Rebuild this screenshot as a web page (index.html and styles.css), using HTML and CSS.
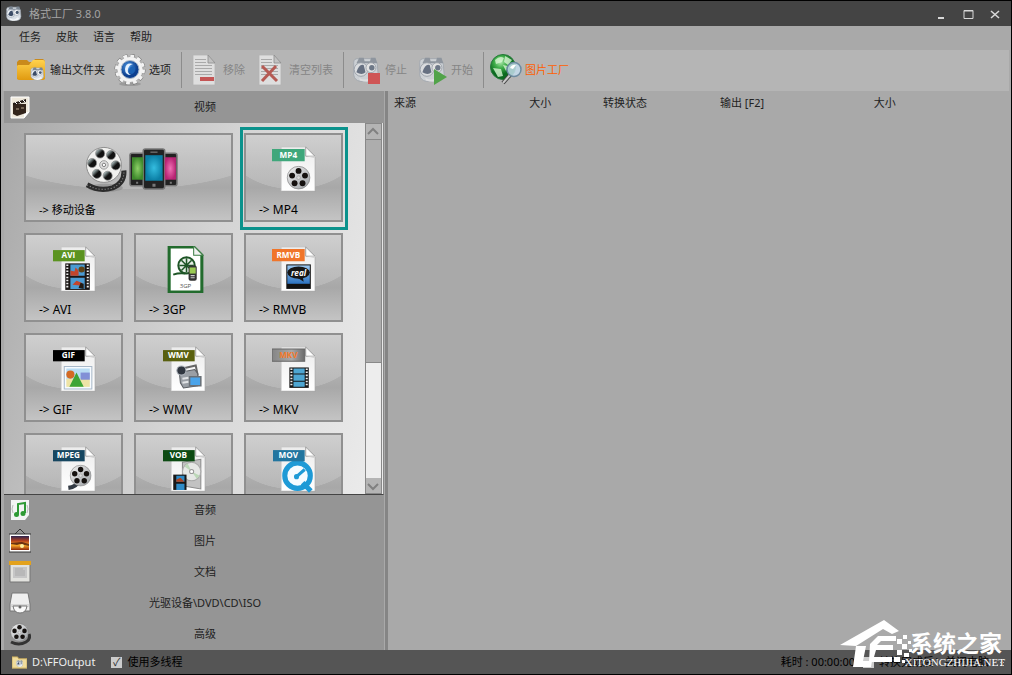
FILE: index.html
```
<!DOCTYPE html>
<html lang="zh-CN">
<head>
    <meta charset="UTF-8">
    <meta name="viewport" content="width=device-width, initial-scale=1.0">
    <title>格式工厂 3.8.0</title>
    <link rel="stylesheet" href="styles.css">
</head>
<body>
    <!-- Shared icon parts -->
    <svg class="defs" aria-hidden="true">
        <defs>
            <linearGradient id="gFolder" x1="0" y1="0" x2="0" y2="1"><stop offset="0" stop-color="#ffd24d"/><stop offset="1" stop-color="#e09a10"/></linearGradient>
            <linearGradient id="gPaper" x1="0" y1="0" x2="0" y2="1"><stop offset="0" stop-color="#ececec"/><stop offset="1" stop-color="#ffffff"/></linearGradient>
            <linearGradient id="gSky" x1="0" y1="0" x2="0" y2="1"><stop offset="0" stop-color="#9cc8f0"/><stop offset="1" stop-color="#2c72c0"/></linearGradient>
            <linearGradient id="gSunset" x1="0" y1="0" x2="0" y2="1"><stop offset="0" stop-color="#2a2350"/><stop offset=".35" stop-color="#b5401c"/><stop offset=".65" stop-color="#ffae2b"/><stop offset="1" stop-color="#8c2408"/></linearGradient>
            <linearGradient id="gMetal" x1="0" y1="0" x2="1" y2="1"><stop offset="0" stop-color="#f4f4f4"/><stop offset="1" stop-color="#9a9ea2"/></linearGradient>
            <linearGradient id="gHole" x1="0" y1="0" x2="1" y2="1"><stop offset=".2" stop-color="#9aa"/><stop offset=".5" stop-color="#111"/></linearGradient>
            <linearGradient id="gTagGrey" x1="0" y1="0" x2="1" y2="0"><stop offset="0" stop-color="#858585"/><stop offset=".6" stop-color="#a8a8a8"/><stop offset="1" stop-color="#6c6c6c"/></linearGradient>
            <radialGradient id="gBlue" cx=".4" cy=".35"><stop offset="0" stop-color="#4f9be6"/><stop offset="1" stop-color="#0c3f8f"/></radialGradient>
            <radialGradient id="gGreen" cx=".4" cy=".3"><stop offset="0" stop-color="#b2eab0"/><stop offset=".5" stop-color="#3dac48"/><stop offset="1" stop-color="#0c6a20"/></radialGradient>
            <radialGradient id="gPhoneG"><stop offset="0" stop-color="#8ed068"/><stop offset="1" stop-color="#3f8a2c"/></radialGradient>
            <radialGradient id="gPhoneB"><stop offset="0" stop-color="#35bde0"/><stop offset="1" stop-color="#0b7fa5"/></radialGradient>
            <radialGradient id="gPhoneP"><stop offset="0" stop-color="#f070b4"/><stop offset="1" stop-color="#b82474"/></radialGradient>

            <symbol id="paper" viewBox="0 0 44 46">
                <path d="M9.500 1.500h25l8 9v34h-33z" fill="#777" opacity=".4"/>
                <path d="M9 1h25l8 9v34H9z" fill="url(#gPaper)" stroke="#c4c4c4" stroke-width=".6"/>
                <path d="M33 1v9h9z" fill="#fff" stroke="#8d8d8d" stroke-width=".8"/>
                <path d="M34 10h8v2z" fill="#d4d4d4"/>
            </symbol>

            <symbol id="reel" viewBox="0 0 40 40">
                <circle cx="20" cy="20" r="18.500" fill="url(#gMetal)" stroke="#777" stroke-width="1"/>
                <g fill="#15110f">
                    <circle cx="20" cy="9" r="4.800"/><circle cx="30.500" cy="16.600" r="4.800"/><circle cx="26.500" cy="29" r="4.800"/>
                    <circle cx="13.500" cy="29" r="4.800"/><circle cx="9.500" cy="16.600" r="4.800"/>
                </g>
                <circle cx="20" cy="20" r="3" fill="#ddd" stroke="#999"/>
            </symbol>

            <symbol id="reel-large" viewBox="0 0 40 40">
                <circle cx="20" cy="20" r="18.500" fill="#f1f1ef" stroke="#8a8a8a" stroke-width="1"/>
                <g fill="url(#gHole)" stroke="#8c8c8c" stroke-width=".8">
                    <circle cx="16" cy="8" r="4.800"/><circle cx="27.500" cy="9.500" r="4.800"/><circle cx="32.500" cy="20.500" r="4.800"/>
                    <circle cx="24" cy="31.500" r="4.800"/><circle cx="12.500" cy="29.500" r="4.800"/><circle cx="7.500" cy="18" r="4.800"/>
                </g>
                <circle cx="20" cy="20" r="4.500" fill="#ddd" stroke="#999"/>
                <circle cx="20" cy="20" r="1.800" fill="#fff" stroke="#777"/>
            </symbol>

            <symbol id="cam" viewBox="0 0 32 32">
                <path d="M3 8q0-4 5-4h13q7 0 8 6l1 12q-1 7-8 7H10Q4 28 3 22z" fill="#d9dfe6" stroke="#98a1ab"/>
                <path d="M9 3h5l1 4h6l1-4h5l2 6H6z" fill="#7a8592"/>
                <circle cx="11" cy="16" r="7.500" fill="#eef2f6" stroke="#8a94a0"/>
                <path d="M6 19q3-10 8-8l2 8q-4 4-10 0z" fill="#3c4c66"/>
                <circle cx="22" cy="14" r="5.500" fill="#fafafa" stroke="#8a94a0"/>
                <circle cx="23" cy="14" r="3" fill="#47586f"/>
                <path d="M9 25q8 5 15-2l3 3q-7 6-17 2z" fill="#f4f6f8"/>
            </symbol>

            <symbol id="sheet" viewBox="0 0 32 32">
                <path d="M5 1h15l7 8v22H5z" fill="#f4f4f4" stroke="#b4b4b4" stroke-width=".8"/>
                <path d="M20 1v8h7z" fill="#c8c8c8" stroke="#777" stroke-width=".8"/>
                <path d="M7 5.500h11M7 8.500h11M7 11.500h17M7 14.500h17M7 17.500h17M7 20.500h17" stroke="#a3a3a3"/>
            </symbol>

            <symbol id="folder" viewBox="0 0 32 32">
                <path d="M2 8l2-2h8l2 2h4l2-3h8l2 2v18H2z" fill="#c98a1c"/>
                <path d="M3 11h11l4-5h10q2 0 2 2v16q0 2-2 2H4q-2 0-2-2V12z" fill="url(#gFolder)"/>
            </symbol>
        </defs>
    </svg>

    <div class="window">
        <header class="titlebar">
            <svg class="app-icon" viewBox="0 0 32 32"><use href="#cam"/></svg>
            <h1>格式工厂 3.8.0</h1>
            <div class="window-controls">
                <button type="button" aria-label="最小化"><svg viewBox="0 0 12 12"><path d="M3 10h6" stroke-width="2"/></svg></button>
                <button type="button" aria-label="最大化"><svg viewBox="0 0 12 12"><path d="M2 2.500h9v8H2zM2 3h9"/></svg></button>
                <button type="button" aria-label="关闭"><svg viewBox="0 0 12 12"><path d="M2 3l8 7M10 3l-8 7" stroke-width="1.600"/></svg></button>
            </div>
        </header>

        <nav class="menubar">
            <button type="button">任务</button>
            <button type="button">皮肤</button>
            <button type="button">语言</button>
            <button type="button">帮助</button>
        </nav>

        <div class="toolbar">
            <button type="button">
                <svg viewBox="0 0 32 32"><use href="#folder"/><use href="#cam" x="14" y="12" width="16" height="15"/></svg>
                输出文件夹
            </button>
            <button type="button">
                <svg viewBox="0 0 32 32">
                    <ellipse cx="16" cy="30" rx="11" ry="2" fill="#888" opacity=".6"/>
                    <circle cx="16" cy="15.500" r="13.500" fill="none" stroke="#707070" stroke-width="4" stroke-dasharray="4.200 2.860"/>
                    <circle cx="16" cy="15.500" r="13" fill="#f3f3f3" stroke="#8a8a8a" stroke-width=".6"/>
                    <circle cx="16" cy="15.500" r="13.500" fill="none" stroke="#f3f3f3" stroke-width="3" stroke-dasharray="3.800 3.260"/>
                    <circle cx="16" cy="15.500" r="9" fill="url(#gBlue)" stroke="#a9b8c8"/>
                    <path d="M19 10q-7-2-8 5 0 6 6 6-4-2-3-6 1-4 5-5z" fill="#e4f1ff"/>
                    <path d="M15 16q1-5 6-3 1 5-3 7-3-1-3-4z" fill="#1c62b4"/>
                </svg>
                选项
            </button>
            <span class="separator"></span>
            <button type="button" disabled>
                <svg viewBox="0 0 32 32"><use href="#sheet"/><path d="M12 23h14v4H12z" fill="#c22"/></svg>
                移除
            </button>
            <button type="button" disabled>
                <svg viewBox="0 0 32 32"><use href="#sheet"/><path d="M8 12l15 15M22 12L8 27" stroke="#b52a20" stroke-width="3"/></svg>
                清空列表
            </button>
            <span class="separator"></span>
            <button type="button" disabled>
                <svg viewBox="0 0 32 32"><use href="#cam" x="1" y="1" width="29" height="29"/><path d="M18 19h12v11H18z" fill="#d22"/></svg>
                停止
            </button>
            <button type="button" disabled>
                <svg viewBox="0 0 32 32"><use href="#cam" x="1" y="1" width="29" height="29"/><path d="M18 15l13 8-13 8z" fill="#1c9a10"/></svg>
                开始
            </button>
            <span class="separator"></span>
            <button type="button" class="highlight">
                <svg viewBox="0 0 32 32">
                    <circle cx="13" cy="13" r="12.500" fill="url(#gGreen)" stroke="#26793a"/>
                    <path d="M5 6q5-5 9-2l-2 4-6 2zM15 2l7 4-4 5-4-3zM3 14l8 1 2 7-5 1zM13 11l5 1-2 5z" fill="#d9f5d4" opacity=".8"/>
                    <path d="M20 21l-7 8" stroke="#444" stroke-width="4"/>
                    <path d="M20 21l-7 8" stroke="#c9c9c9" stroke-width="2"/>
                    <circle cx="24" cy="15.500" r="7" fill="#c4dcec" fill-opacity=".85" stroke="#6d8ba0" stroke-width="1.500"/>
                    <path d="M20 14q2-4 6-3l-3 4z" fill="#fff"/>
                </svg>
                图片工厂
            </button>
        </div>

        <main class="content">
            <aside class="sidebar">
                <button type="button" class="category category-open">
                    <svg viewBox="0 0 22 24">
                        <path d="M2 2h18v15l-5 6H2z" fill="#efe9dc" stroke="#fff"/>
                        <path d="M20 17h-5v6z" fill="#fff"/>
                        <path d="M4 9h13v9l-9 3-4-2z" fill="#33251c"/>
                        <path d="M4 8l13-4v3L4 10z" fill="#241b16"/>
                        <path d="M6 7l2 2M10 6l2 2M14 5l2 2" stroke="#fff"/>
                        <path d="M7 14h3M12 13h3" stroke="#b7a48c"/>
                    </svg>
                    <span>视频</span>
                </button>

                <div class="format-panel">
                    <div class="format-grid">
                        <button type="button" class="tile tile-wide">
                            <svg viewBox="0 0 94 46">
                                <ellipse cx="21" cy="41" rx="17" ry="4" fill="#888" opacity=".6"/>
                                <path d="M3 38q12 7 25 3 12-5 11-17" fill="none" stroke="#2c2c2c" stroke-width="5"/>
                                <path d="M3 38q12 7 25 3 12-5 11-17" fill="none" stroke="#999" stroke-dasharray="1 2"/>
                                <use href="#reel-large" x="1" y="0" width="37" height="37"/>
                                <g stroke="#777" stroke-width="1.500">
                                    <rect x="45" y="7" width="16" height="32" rx="2" fill="#222"/>
                                    <rect x="76" y="7" width="15" height="32" rx="2" fill="#222"/>
                                    <rect x="58" y="3" width="21" height="39" rx="2" fill="#222"/>
                                </g>
                                <path d="M47 11h11v22H47z" fill="url(#gPhoneG)"/>
                                <path d="M79 11h11v22H79z" fill="url(#gPhoneP)"/>
                                <path d="M60 9h17v25H60z" fill="url(#gPhoneB)"/>
                                <path d="M65 6h7" stroke="#888"/>
                                <path d="M67 37h3v3h-3zM51 35h2v2h-2zM84 35h2v2h-2z" fill="#777"/>
                            </svg>
                            <span>-&gt; 移动设备</span>
                        </button>

                        <button type="button" class="tile tile-selected">
                            <svg viewBox="0 0 44 46">
                                <use href="#paper"/><use href="#reel" x="14" y="19" width="24" height="24"/>
                                <path d="M0 3h32v12H0z" fill="#3fa77b"/><text class="tag" x="16" y="12">MP4</text>
                            </svg>
                            <span>-&gt; MP4</span>
                        </button>

                        <button type="button" class="tile">
                            <svg viewBox="0 0 44 46">
                                <use href="#paper"/>
                                <path d="M13 17h24v26H13z" fill="#1a1614"/>
                                <path d="M18 18h14v11H18zM18 31h14v11H18z" fill="#4b9bd2"/>
                                <path d="M18 24l4 1 1-4 3 3v5h-8zM20 38l4-4 5 2 1 3z" fill="#c2452b"/>
                                <circle cx="29" cy="23" r="3" fill="#5d4317"/>
                                <path d="M26 41l2-5 3 1v5z" fill="#221a12"/>
                                <path d="M15 18v24M35 18v24" stroke="#eee" stroke-width="2" stroke-dasharray="1.500 1.500"/>
                                <path d="M1 4h31v11H1z" fill="#5b9320"/><text class="tag" x="16" y="12">AVI</text>
                            </svg>
                            <span>-&gt; AVI</span>
                        </button>

                        <button type="button" class="tile">
                            <svg viewBox="0 0 44 46">
                                <path d="M7 1h24l8 8v36H7z" fill="#fff" stroke="#226b2d" stroke-width="3"/>
                                <path d="M31 0v9h9z" fill="#f2f2f2" stroke="#3b7d44"/>
                                <circle cx="24" cy="19" r="8" fill="#e7eee7" stroke="#1e5526" stroke-width="2"/>
                                <path d="M24 12v14M17 19h14M19 14l10 10M29 14L19 24" stroke="#1e5526" stroke-width="1.500"/>
                                <path d="M11 28q6-2 12-1" fill="none" stroke="#1e5526" stroke-width="2"/>
                                <rect x="26" y="19" width="8" height="15" rx="2" fill="#333"/>
                                <path d="M27 21h6v6h-6z" fill="#9acb53"/>
                                <path d="M28 29h4M28 31h4" stroke="#ccc"/>
                                <text class="tag tag-small" x="23" y="41">3GP</text>
                            </svg>
                            <span>-&gt; 3GP</span>
                        </button>

                        <button type="button" class="tile">
                            <svg viewBox="0 0 44 46">
                                <use href="#paper"/>
                                <path d="M14 18h24v24H14z" fill="#111"/>
                                <path d="M15 19h22v18H15z" fill="url(#gSky)"/>
                                <ellipse cx="26" cy="26" rx="11" ry="6" fill="#151515"/>
                                <path d="M25 31l6 4-1-5z" fill="#151515"/>
                                <text class="tag tag-real" x="26" y="29">real</text>
                                <path d="M0 3h32v12H0z" fill="#f0752a"/><text class="tag" x="16" y="12">RMVB</text>
                            </svg>
                            <span>-&gt; RMVB</span>
                        </button>

                        <button type="button" class="tile">
                            <svg viewBox="0 0 44 46">
                                <use href="#paper"/>
                                <path d="M12 20h27v22H12z" fill="#f7fbff" stroke="#a8b8c8"/>
                                <path d="M14 22h23v11H14z" fill="#b9dcf3"/><path d="M14 32h23v8H14z" fill="#eee4a6"/>
                                <circle cx="18" cy="28" r="4" fill="#d36a24"/>
                                <path d="M28 26h9v7h-9z" fill="#8290d6"/>
                                <path d="M24 26l7 14H17z" fill="#3ea536"/>
                                <path d="M1 4h31v11H1z" fill="#000"/><text class="tag" x="16" y="12">GIF</text>
                            </svg>
                            <span>-&gt; GIF</span>
                        </button>

                        <button type="button" class="tile">
                            <svg viewBox="0 0 44 46">
                                <use href="#paper"/>
                                <path d="M20 22l13-3 2 10" fill="none" stroke="#666" stroke-width="2"/>
                                <path d="M17 26l15-3 3 4v12l-14 2-3-5z" fill="#9a9fa5" stroke="#5a5e63"/>
                                <circle cx="19" cy="24" r="4.500" fill="#30363f" stroke="#aeb4bb"/>
                                <path d="M20 32l6-1M20 36l6-1" stroke="#e2e4e6" stroke-width="2"/>
                                <path d="M27 30h11v9H27z" fill="#4ba4ea" stroke="#6a7076" stroke-width="1.500"/>
                                <path d="M1 4h31v11H1z" fill="#59600f"/><text class="tag" x="16" y="12">WMV</text>
                            </svg>
                            <span>-&gt; WMV</span>
                        </button>

                        <button type="button" class="tile">
                            <svg viewBox="0 0 44 46">
                                <use href="#paper"/>
                                <path d="M17 21h19v20H17z" fill="#161616"/>
                                <path d="M21 22h11v5H21zM21 28h11v6H21zM21 35h11v5H21z" fill="#4ea6d2"/>
                                <path d="M19 22v18M34 22v18" stroke="#eee" stroke-width="2" stroke-dasharray="1.500 1.500"/>
                                <path d="M0 3h32v12H0z" fill="url(#gTagGrey)" stroke="#666"/><text class="tag tag-orange" x="16" y="12">MKV</text>
                            </svg>
                            <span>-&gt; MKV</span>
                        </button>

                        <button type="button" class="tile">
                            <svg viewBox="0 0 44 46">
                                <use href="#paper"/>
                                <path d="M16 41q8-1 9-6" fill="none" stroke="#333b44" stroke-width="4"/>
                                <use href="#reel" x="17" y="18" width="22" height="22"/>
                                <path d="M1 4h31v11H1z" fill="#164660"/><text class="tag" x="16" y="12">MPEG</text>
                            </svg>
                        </button>

                        <button type="button" class="tile">
                            <svg viewBox="0 0 44 46">
                                <use href="#paper"/>
                                <path d="M20 16l18-3v29l-18-3z" fill="#c2c2c2" stroke="#8b8b8b"/>
                                <circle cx="29" cy="25" r="9" fill="#e6e8e6" stroke="#aaa"/>
                                <path d="M29 25l-7-5 3-3zM29 25l8 4-3 3z" fill="#bcd8b8"/>
                                <circle cx="29" cy="25" r="2" fill="#fff" stroke="#999"/>
                                <path d="M11 28h13v15H11z" fill="#181818"/>
                                <path d="M14 29h8v6h-8zM14 37h8v6h-8z" fill="#2f8cc8"/><path d="M14 33l4-2 4 4h-8z" fill="#b2431f"/>
                                <path d="M1 4h31v11H1z" fill="#0c4a12"/><text class="tag" x="16" y="12">VOB</text>
                            </svg>
                        </button>

                        <button type="button" class="tile">
                            <svg viewBox="0 0 44 46">
                                <use href="#paper"/>
                                <circle cx="25" cy="29" r="12.500" fill="#f5fbff" stroke="#1e9ad6" stroke-width="5"/>
                                <path d="M24 30l8-7" stroke="#1e9ad6" stroke-width="3"/>
                                <circle cx="24" cy="30" r="2.500" fill="#1e9ad6"/>
                                <path d="M30 36l8 8" stroke="#1e9ad6" stroke-width="5"/>
                                <path d="M1 4h31v11H1z" fill="#22759f"/><text class="tag" x="16" y="12">MOV</text>
                            </svg>
                        </button>
                    </div>

                    <div class="scrollbar">
                        <button type="button" aria-label="向上滚动"><svg viewBox="0 0 14 14"><path d="M2 9l5-5 5 5"/></svg></button>
                        <div class="scroll-thumb"></div>
                        <div class="scroll-track"></div>
                        <button type="button" aria-label="向下滚动"><svg viewBox="0 0 14 14"><path d="M2 5l5 5 5-5"/></svg></button>
                    </div>
                </div>

                <button type="button" class="category">
                    <svg viewBox="0 0 22 24">
                        <path d="M2 2h18v15l-4 5H2z" fill="#f4f4f4"/>
                        <path d="M9 16V6l7-1v10" fill="none" stroke="#2f9a35" stroke-width="2"/>
                        <circle cx="7.500" cy="16.500" r="2.500" fill="#2f9a35"/><circle cx="14" cy="15.500" r="2.500" fill="#2f9a35"/>
                        <path d="M4 7q-2 4 0 8M18 7q2 4 0 8" fill="none" stroke="#bbb"/>
                    </svg>
                    <span>音频</span>
                </button>
                <button type="button" class="category">
                    <svg viewBox="0 0 22 24">
                        <path d="M6 5l5-5 5 5" fill="none" stroke="#333"/>
                        <path d="M0 5h22v18H0z" fill="#fff" stroke="#333"/>
                        <path d="M2 7h18v14H2z" fill="url(#gSunset)"/>
                        <path d="M2 15l6 1 3-1 9 2v-2l-7-2-11 1z" fill="#37100a" opacity=".7"/>
                        <circle cx="13" cy="17" r="2" fill="#fff1a0"/>
                    </svg>
                    <span>图片</span>
                </button>
                <button type="button" class="category">
                    <svg viewBox="0 0 22 24">
                        <path d="M1 2h20v20H1z" fill="#e2e2de" stroke="#777"/>
                        <path d="M0 1h22v4H0z" fill="#e3a21d"/>
                        <path d="M4 7h14v11H4z" fill="#c6c6c6"/>
                        <path d="M6 9h8M6 11h10M6 13h10M6 15h10" stroke="#aaa"/>
                    </svg>
                    <span>文档</span>
                </button>
                <button type="button" class="category">
                    <svg viewBox="0 0 22 24">
                        <path d="M3 2h16l2 11v7H1v-7z" fill="#efefef" stroke="#777"/>
                        <path d="M2 13h18v3H2z" fill="#d8d8d8"/>
                        <path d="M4 15h14q-1 7-7 7t-7-7z" fill="#fafafa" stroke="#777"/>
                        <circle cx="11" cy="16" r="1.500" fill="#666"/>
                    </svg>
                    <span>光驱设备\DVD\CD\ISO</span>
                </button>
                <button type="button" class="category">
                    <svg viewBox="0 0 22 24">
                        <path d="M2 20q8 4 15 0 5-3 3-8" fill="none" stroke="#333" stroke-width="3"/>
                        <use href="#reel" x="1" y="1" width="19" height="19"/>
                    </svg>
                    <span>高级</span>
                </button>
            </aside>

            <section class="task-list">
                <table>
                    <thead>
                        <tr>
                            <th scope="col" class="col-source">来源</th>
                            <th scope="col" class="col-size">大小</th>
                            <th scope="col" class="col-state">转换状态</th>
                            <th scope="col" class="col-output">输出 [F2]</th>
                            <th scope="col">大小</th>
                        </tr>
                    </thead>
                </table>
            </section>
        </main>

        <footer class="statusbar">
            <a href="#" class="output-path">
                <svg viewBox="0 0 16 16"><path d="M0 2h6l1 2h9v10H0z" fill="#f0dc9c" stroke="#c9ac5c"/><use href="#cam" x="4" y="5" width="8" height="8"/></svg>
                D:\FFOutput
            </a>
            <label><input type="checkbox" checked> 使用多线程</label>
            <span class="elapsed">耗时 : 00:00:00</span>
            <label class="when-done"><input type="checkbox"> 转换完成后：关闭电脑</label>
            <span class="grip"></span>
        </footer>

        <div class="watermark">
            <svg viewBox="0 0 75 50">
                <g fill="#fff">
                    <path d="M0 26L44 1l15 11-7 3-9-5-27 17z"/>
                    <path d="M16 27h10l-3 15h9l-1 6H13z"/>
                    <path d="M30 25l8-8h18v5H41l-4 4h16v5H36l-2 7h18v5H29z"/>
                    <path d="M57 20h5v5h-5zM63 16h4v4h-4zM62 25h5v5h-5zM57 31h5v5h-5zM68 22h3v3h-3zM64 34h5v4h-5zM69 30h3v3h-3zM54 38h6v5h-6zM62 41h3v3h-3z"/>
                </g>
            </svg>
            <div>
                <strong>系统之家</strong>
                <small>XITONGZHIJIA.NET</small>
            </div>
        </div>
    </div>
</body>
</html>
```
FILE: styles.css
```
* {
    box-sizing: border-box;
}

body {
    margin: 0;
    font-family: "Noto Sans", "Noto Sans CJK SC", sans-serif;
    font-size: 11px;
    line-height: 16px;
    color: #222;
}

button {
    margin: 0;
    padding: 0;
    border: 0;
    background: none;
    font: inherit;
    color: inherit;
}

.defs {
    position: absolute;
    width: 0;
    height: 0;
}

.window {
    position: relative;
    display: flex;
    flex-direction: column;
    height: 100vh;
    border: 1px solid #000;
    background: #a9a9a9;
}

/* Title bar */
.titlebar {
    display: flex;
    align-items: center;
    height: 25px;
    padding: 0 3px 0 4px;
    background: #444;
    color: #a4a4a4;
}

.app-icon {
    width: 17px;
    height: 17px;
    margin-right: 7px;
}

.titlebar h1 {
    margin: 0;
    font-size: 11px;
    font-weight: normal;
}

.window-controls {
    display: flex;
    margin-left: auto;
}

.window-controls button {
    display: flex;
    justify-content: center;
    width: 27px;
}

.window-controls svg {
    width: 12px;
    height: 12px;
    fill: none;
    stroke: #d8d8d8;
}

/* Menu and toolbar */
.menubar {
    display: flex;
    gap: 15px;
    height: 24px;
    padding: 0 18px 2px;
}

.toolbar {
    display: flex;
    align-items: center;
    height: 41px;
    margin: 0 2px;
    padding: 0 0 2px 12px;
    background: #b5b5b5;
}

.toolbar button {
    display: flex;
    align-items: center;
    gap: 3px;
    white-space: nowrap;
}

.toolbar button + button {
    margin-left: 9px;
}

.toolbar svg {
    width: 32px;
    height: 32px;
}

.toolbar button:disabled {
    color: #858585;
}

.toolbar button:disabled svg {
    opacity: 0.65;
}

.toolbar .highlight {
    color: #ff6000;
}

.separator {
    width: 1px;
    height: 36px;
    margin: 0 6px 0 10px;
    background: #8c8c8c;
}

/* Main area */
.content {
    display: flex;
    flex: 1;
    min-height: 0;
    padding-left: 3px;
}

.sidebar {
    display: flex;
    flex-direction: column;
    flex: none;
    width: 380px;
    background: #959595;
}

.category {
    display: flex;
    align-items: center;
    flex: none;
    height: 31px;
    padding: 0 5px 2px;
}

.category svg {
    width: 22px;
    height: 24px;
}

.category span {
    flex: 1;
    text-align: center;
}

.category-open {
    height: 32px;
    padding-bottom: 0;
}

.format-panel {
    display: flex;
    flex: 1;
    min-height: 0;
    overflow: hidden;
    border-right: 1px solid #888;
    border-bottom: 1px solid #444;
    background: linear-gradient(105deg, #a8a8a8 0%, #d4d4d4 50%, #ececec 100%);
}

.format-grid {
    display: grid;
    grid-template-columns: repeat(3, 99px);
    grid-auto-rows: 89px;
    gap: 11px;
    flex: 1;
    padding: 10px 20px 0;
}

.tile {
    position: relative;
    display: flex;
    flex-direction: column;
    align-items: center;
    justify-content: space-between;
    padding: 11px 0 2px 13px;
    border: 2px solid #909090;
    background:
        radial-gradient(ellipse 76% 64% at 50% 0, rgba(255, 255, 255, 0.16) 99%, transparent 100%),
        linear-gradient(#c6c6c6 0%, #a8a8a8 62%, #c4c4c4 100%);
    color: #000;
    font-size: 12px;
}

.tile svg {
    height: 47px;
    margin-right: 11px;
}

.tile span {
    align-self: flex-start;
}

.tile-wide {
    grid-column: span 2;
    font-size: 11px;
}

.tile-wide svg {
    margin-right: 5px;
}

.tile-selected::after {
    content: "";
    position: absolute;
    inset: -8px -7px -10px -6px;
    border: 3px solid #0b928c;
}

.tag {
    font-family: "Open Sans", sans-serif;
    font-size: 8px;
    font-weight: bold;
    text-anchor: middle;
    fill: #fff;
}

.tag-small {
    font-size: 6px;
    font-weight: normal;
    fill: #555;
}

.tag-real {
    font-style: italic;
}

.tag-orange {
    fill: #f57a2c;
}

.scrollbar {
    display: flex;
    flex-direction: column;
    width: 17px;
    margin-right: 1px;
    border: 1px solid #888;
    background: #ededed;
}

.scrollbar button {
    height: 15px;
    background: #b4b4b4;
}

.scrollbar svg {
    display: block;
    width: 14px;
    height: 14px;
    fill: none;
    stroke: #808080;
    stroke-width: 2;
}

.scroll-thumb {
    flex: 66;
    border: solid #888;
    border-width: 1px 0;
    background: #adadad;
}

.scroll-track {
    flex: 34;
}

/* Task list */
.task-list {
    flex: 1;
    border-left: 3px solid #858585;
    margin-left: 1px;
    padding: 4px 8px 0 0;
}

.task-list table {
    width: 100%;
    table-layout: fixed;
    border-collapse: collapse;
}

.task-list th {
    padding: 0 0 0 6px;
    font-weight: normal;
    text-align: left;
}

.col-source {
    width: 22%;
}

.col-size {
    width: 12%;
}

.col-state {
    width: 19%;
}

.col-output {
    width: 25%;
}

/* Status bar */
.statusbar {
    display: flex;
    align-items: center;
    flex: none;
    height: 24px;
    padding: 0 6px 0 11px;
    background: #555;
    color: #000;
    white-space: nowrap;
}

.output-path {
    display: flex;
    align-items: center;
    gap: 5px;
    margin-right: 16px;
    color: #eee;
    text-decoration: none;
}

.output-path svg {
    width: 15px;
    height: 15px;
}

.statusbar label {
    display: flex;
    align-items: center;
    gap: 5px;
}

.statusbar input {
    appearance: none;
    width: 11px;
    height: 11px;
    margin: 0;
    background: #ccc;
}

.statusbar input:checked::before {
    content: "✓";
    display: block;
    font-size: 11px;
    line-height: 11px;
    text-align: center;
    color: #333;
}

.elapsed {
    margin-left: auto;
}

.when-done {
    margin-left: 8px;
}

.grip {
    width: 9px;
    height: 9px;
    margin-left: 7px;
    background: radial-gradient(#bbb 1px, transparent 1px) 0 0 / 3px 3px;
    clip-path: polygon(100% 0, 100% 100%, 0 100%);
}

/* Site mark over the bottom right corner */
.watermark {
    position: absolute;
    right: 6px;
    bottom: 5px;
    display: flex;
    align-items: flex-end;
    color: #fff;
    pointer-events: none;
}

.watermark svg {
    width: 75px;
    height: 50px;
}

.watermark div {
    margin-left: -10px;
    text-align: right;
}

.watermark strong,
.watermark small {
    display: block;
}

.watermark strong {
    margin-right: 3px;
    font-size: 23px;
    line-height: 24px;
}

.watermark small {
    font-family: "Liberation Serif", serif;
    font-size: 11px;
    line-height: 14px;
}
```
